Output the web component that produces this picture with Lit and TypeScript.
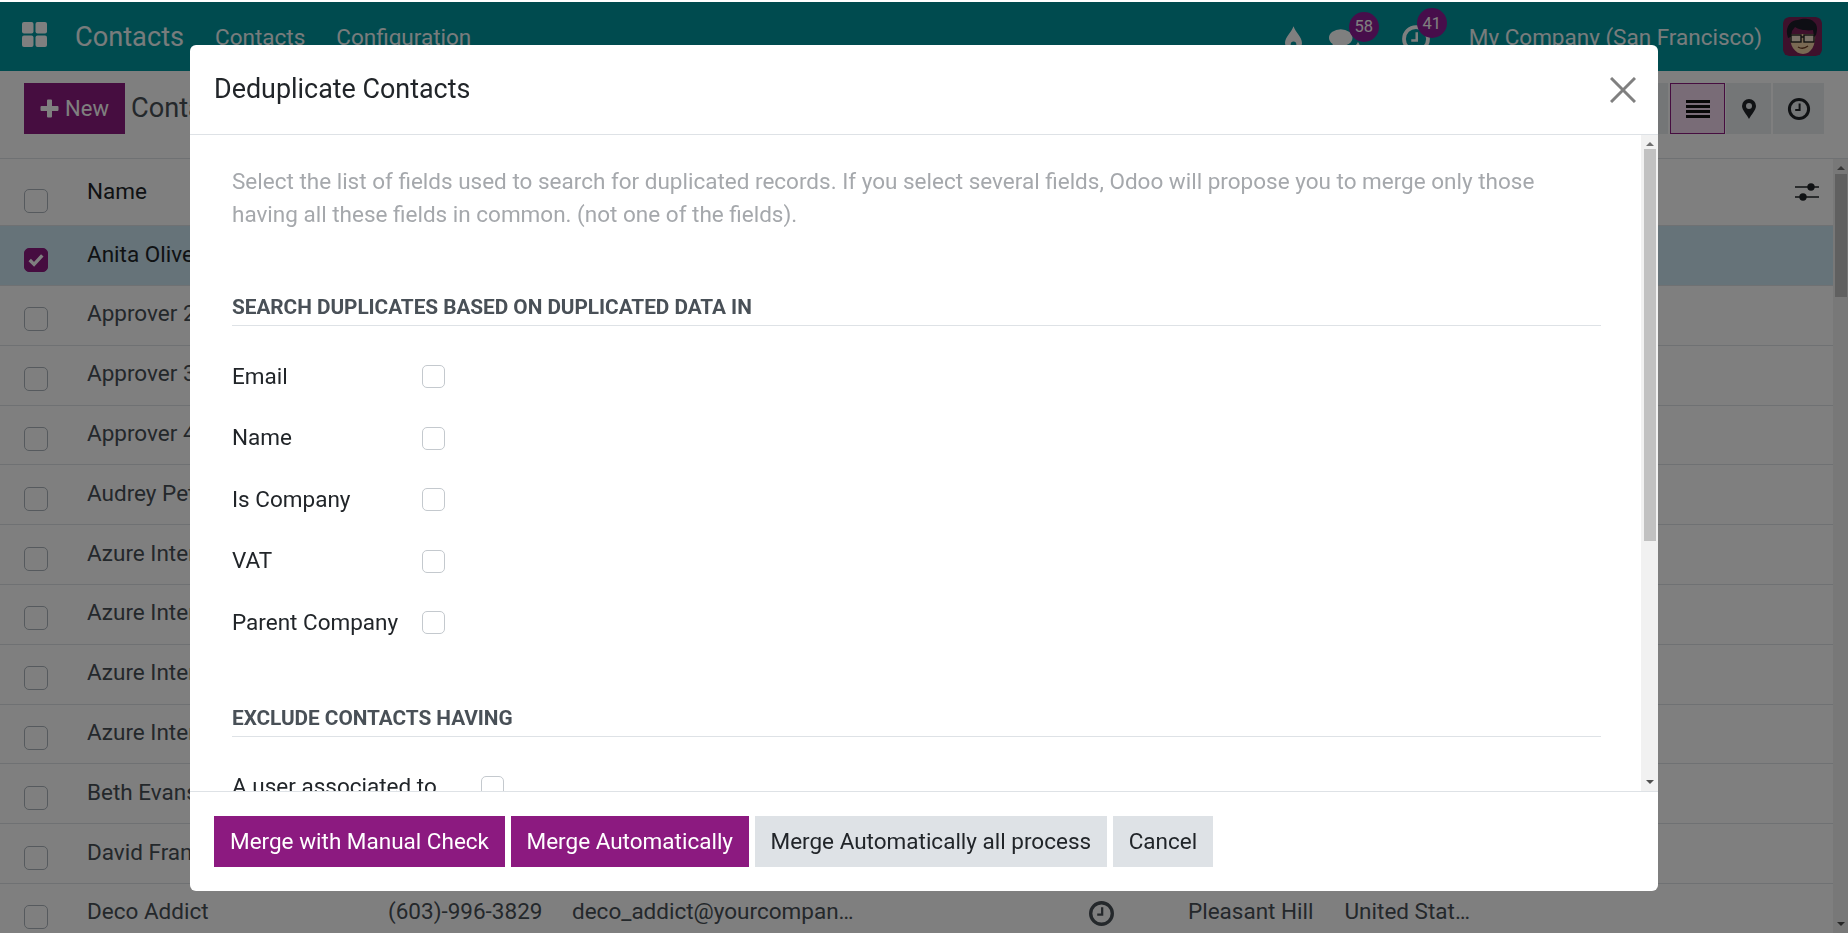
import { LitElement, html, css, svg } from "lit";
import { customElement } from "lit/decorators.js";

const clock = (s: number) => html`<svg class="ic" width=${s} height=${s} viewBox="0 0 24 24"><circle cx="12" cy="12" r="9.6" fill="none" stroke="currentColor" stroke-width="3"/><path d="M12.6 6.5v6.600H8.2" fill="none" stroke="currentColor" stroke-width="2"/></svg>`;

const rows: [string, string, string, string, string, boolean][] = [
  ["Anita Oliver", "", "", "", "", false],
  ["Approver 2", "", "", "", "", false],
  ["Approver 3", "", "", "", "", false],
  ["Approver 4", "", "", "", "", false],
  ["Audrey Peterson", "", "", "", "", false],
  ["Azure Interior", "", "", "", "", false],
  ["Azure Interior, Brandon", "", "", "", "", false],
  ["Azure Interior, Colleen", "", "", "", "", false],
  ["Azure Interior, Nicole", "", "", "", "", false],
  ["Beth Evans", "", "", "", "", false],
  ["David Franklin", "", "", "", "", false],
  ["Deco Addict", "(603)-996-3829", "deco_addict@yourcompan…", "Pleasant Hill", "United Stat…", true],
];

@customElement("app-root")
export class AppRoot extends LitElement {
  static styles = css`
    :host { display: block; width: 1848px; height: 933px; overflow: hidden; background: #fff; font-family: Roboto, "Liberation Sans", sans-serif; font-size: 22.5px; color: #212529; --primary: #8c1a80; }
    * { box-sizing: border-box; }
    .page { margin-top: 2px; height: 931px; display: flex; flex-direction: column; overflow: hidden; }
    .nav { flex: 0 0 69px; background: #00969f; color: #fff; display: flex; align-items: center; }
    .apps { margin-left: 22px; width: 25px; height: 25px; display: block; margin-top: -4px; }
    .brand { margin-left: 28px; font-size: 27.2px; opacity: .94; }
    .menu { margin-left: 31px; opacity: .94; display: flex; gap: 31px; }
    .tray { margin-left: auto; display: flex; align-items: center; height: 100%; }
    .ti { position: relative; display: block; }
    .badge { position: absolute; width: 30px; height: 30px; border-radius: 50%; background: #8f1c96; color: #fff; font-size: 16.5px; display: flex; align-items: center; justify-content: center; }
    .company { margin-left: 38px; opacity: .94; }
    .avatar { margin: 0 26px 0 21px; display: block; border-radius: 6px; }
    .panel { flex: 0 0 88px; border-bottom: 1px solid #dee2e6; display: flex; align-items: flex-start; padding: 12px 24px 0; background: #fff; }
    .new { height: 51px; width: 101px; background: var(--primary); color: #fff; display: flex; align-items: center; justify-content: center; gap: 6px; font-size: 22px; }
    .pt { margin-left: 6px; font-size: 27.2px; line-height: 50px; color: #495057; }
    .views { margin-left: auto; display: flex; gap: 1px; }
    .vb { height: 51px; background: #e9ecef; display: flex; align-items: center; justify-content: center; color: #212529; width: 45px; }
    .vb.ghost { width: 60px; margin-right: 1px; }
    .vb.on { width: 55px; background: #f2d9ee; border: 1px solid var(--primary); color: #111; }
    .vb.last { width: 51px; margin-left: 1px; }
    .list { flex: 1; display: flex; min-height: 0; }
    .tbl { flex: 1; min-width: 0; }
    .row { display: grid; grid-template-columns: 87px 301px 184px 562px 1fr; height: 59.8px; align-items: center; border-bottom: 1px solid #dee2e6; }
    .row.head { height: 67px; }
    .row.sel { background: #cce6f2; height: 60px; }
    .head .adj { justify-self: end; margin-right: 14px; grid-column: 5; display: flex; }
    .row .name { white-space: nowrap; overflow: hidden; }
    .row .name, .row .c { color: #495057; transform: translateY(-2px); }
    .row.head .name { transform: translateY(-1px); }
    .row.head .name, .row.sel .name { color: #212529; }
    .cell-c { display: flex; align-items: center; }
    .cb { width: 24px; height: 24px; margin-left: 24px; border: 1px solid #adb5bd; border-radius: 5px; background: #fff; display: block; transform: translateY(4px); }
    .head .cb { transform: translateY(9px); }
    .cb.on { background: var(--primary); border-color: var(--primary); display: flex; align-items: center; justify-content: center; }
    .city { display: flex; gap: 31px; transform: translateY(-2px); color: #495057; margin-left: 73px; }
    .clk { display: flex; align-items: center; color: #495057; margin-left: -46px; grid-column: 5; }
    .sb { flex: 0 0 15px; background: #f0f0f0; position: relative; display: flex; flex-direction: column; align-items: center; }
    .ar { flex: none; width: 0; height: 0; border-left: 4px solid transparent; border-right: 4px solid transparent; }
    .ar.up { border-bottom: 4px solid #707070; margin-top: 7px; }
    .ar.dn { border-top: 4px solid #505050; margin-top: auto; margin-bottom: 7px; }
    .th { background: #c1c1c1; width: 12px; margin-top: 4px; }
    .list .th { height: 123px; }
    .back { position: fixed; left: 0; right: 0; top: 2px; bottom: 0; background: rgba(0,0,0,.5); }
    .modal { position: fixed; left: 190px; top: 45px; width: 1468px; height: 846px; background: #fff; border-radius: 6px; display: flex; flex-direction: column; overflow: hidden; }
    .mh { flex: 0 0 90px; border-bottom: 1px solid #dee2e6; display: flex; align-items: center; justify-content: space-between; padding: 0 22px 0 24px; }
    .title { font-size: 26.9px; line-height: 1; }
    .x { display: block; margin-top: 1px; }
    .mb { flex: 1; min-height: 0; display: flex; }
    .mc { flex: 1; min-width: 0; overflow: hidden; padding: 30px 0 0 42px; }
    .inner { width: 1411px; }
    .intro { color: #a5a8ac; line-height: 33px; margin: 0; width: 1335px; }
    h3 { margin: 59px 0 0; height: 36px; font-size: 20.8px; font-weight: 700; color: #495057; line-height: 35px; border-bottom: 1.5px solid #dee2e6; width: 1369px; letter-spacing: -.05px; }
    h3.second { margin-top: 47px; }
    .form { margin-top: 20px; display: grid; grid-template-columns: max-content 1fr; column-gap: 24px; grid-auto-rows: 61.5px; align-items: center; }
    .form.ex { column-gap: 44px; }
    .form .lb { transform: translateY(-1px); }
    .fcb { width: 23px; height: 23px; border: 1px solid #c4c9ce; border-radius: 5px; background: #fff; display: block; }
    .mb .sb { flex: 0 0 17px; background: #f1f1f1; }
    .mb .th { height: 392px; margin-top: 3px; }
    .mf { flex: 0 0 100px; border-top: 1.5px solid #dee2e6; padding: 24px 0 0 24px; display: flex; gap: 5.5px; align-items: flex-start; }
    .btn { height: 51px; padding: 0 16px 2px; display: flex; align-items: center; background: #dee2e6; color: #212529; white-space: nowrap; }
    .btn.pri { background: var(--primary); color: #fff; }
  `;

  private face() {
    return html`<svg class="avatar" width="39" height="39" viewBox="0 0 39 39">
      <rect width="39" height="39" rx="6" fill="#7c2258"/>
      <path d="M7 17c-1 11 5 20 13 20s13-9 12-20z" fill="#f3d3a6"/>
      <path d="M4 17C3 9 8 3 15 3c5-2 13-2 16 2 3 2 4 7 2 13l-2 2-1-7c-5 1-14 0-18-3l-3 4-1 6-3 1z" fill="#1c1c28"/>
      <rect x="8" y="18" width="10" height="7" fill="#f7e7d0" stroke="#222" stroke-width="1.400"/>
      <rect x="21" y="18" width="10" height="7" fill="#f7e7d0" stroke="#222" stroke-width="1.400"/>
      <path d="M18 20h3" stroke="#222" stroke-width="1.400"/>
      <path d="M15 30q5 3 10-1" fill="none" stroke="#6a3a22" stroke-width="1.300"/>
    </svg>`;
  }

  render() {
    const boxes = ["Email", "Name", "Is Company", "VAT", "Parent Company"];
    return html`
      <div class="page">
        <div class="nav">
          <svg class="apps" viewBox="0 0 25 25" fill="#fff"><rect width="11.5" height="11.5" rx="2"/><rect x="13.5" width="11.5" height="11.5" rx="2"/><rect y="13.5" width="11.5" height="11.5" rx="2"/><rect x="13.5" y="13.5" width="11.5" height="11.5" rx="2"/></svg>
          <div class="brand">Contacts</div>
          <div class="menu"><span>Contacts</span><span>Configuration</span></div>
          <div class="tray">
            <svg class="ti" style="margin-top:4px" width="17" height="26" viewBox="0 0 16 24"><path d="M8 0c2 6 8 10 8 16a8 8 0 0 1-16 0C0 10 6 6 8 0z" fill="#fff"/><circle cx="8" cy="17" r="2.600" fill="#00969f"/></svg>
            <div class="ti" style="margin-left:27px;width:32px;height:26px;margin-top:8px">
              <svg width="32" height="26" viewBox="0 0 30 24" fill="#fff"><ellipse cx="11" cy="9" rx="11" ry="8"/><path d="M4 13l-2 8 8-4z"/><path d="M14 19c6 1 12-2 13-6 2 2 3 5 0 8l1 3-5-2c-3 1-7 0-9-3z"/></svg>
              <span class="badge" style="left:20px;top:-16px">58</span>
            </div>
            <div class="ti" style="margin-left:40px;color:#fff;margin-top:5px;height:30px">
              ${clock(30)}
              <span class="badge" style="left:16px;top:-16px">41</span>
            </div>
            <div class="company">My Company (San Francisco)</div>
            ${this.face()}
          </div>
        </div>
        <div class="panel">
          <div class="new"><svg width="19" height="19" viewBox="0 0 19 19" fill="#fff"><path d="M7 1.500a1 1 0 0 1 1-1h3a1 1 0 0 1 1 1V7h5.500a1 1 0 0 1 1 1v3a1 1 0 0 1-1 1H12v5.500a1 1 0 0 1-1 1H8a1 1 0 0 1-1-1V12H1.500a1 1 0 0 1-1-1V8a1 1 0 0 1 1-1H7z"/></svg>New</div>
          <div class="pt">Contacts</div>
          <div class="views">
            <div class="vb ghost"></div>
            <div class="vb on"><svg width="24" height="18" viewBox="0 0 24 18" fill="currentColor"><rect width="24" height="3"/><rect y="5" width="24" height="3"/><rect y="10" width="24" height="3"/><rect y="15" width="24" height="3"/></svg></div>
            <div class="vb"><svg width="14" height="20" viewBox="0 0 14 20"><path fill-rule="evenodd" d="M7 0a7 7 0 0 1 7 7c0 4-5 9-7 13C5 16 0 11 0 7a7 7 0 0 1 7-7zm0 4a3 3 0 1 0 0 6 3 3 0 0 0 0-6z" fill="currentColor"/></svg></div>
            <div class="vb last">${clock(24)}</div>
          </div>
        </div>
        <div class="list">
          <div class="tbl">
            <div class="row head">
              <div class="cell-c"><span class="cb"></span></div>
              <div class="name">Name</div>
              <div class="adj"><svg width="24" height="20" viewBox="0 0 24 20" fill="none"><path d="M0 5h24M0 15h24" stroke="#212529" stroke-width="1.400"/><circle cx="16" cy="5" r="3.700" fill="#212529"/><circle cx="8" cy="15" r="3.700" fill="#212529"/></svg></div>
            </div>
            ${rows.map((r, i) => html`
              <div class="row ${i === 0 ? "sel" : ""}">
                <div class="cell-c">
                  <span class="cb ${i === 0 ? "on" : ""}">${i === 0 ? svg`<svg width="16" height="14" viewBox="0 0 14 12"><path d="M1.500 6l3.800 3.800L12.500 2" fill="none" stroke="#fff" stroke-width="3"/></svg>` : ""}</span>
                </div>
                <div class="name">${r[0]}</div>
                <div class="c">${r[1]}</div>
                <div class="c">${r[2]}</div>
                ${r[5] ? html`<div class="clk">${clock(27)}<div class="city"><span>${r[3]}</span><span>${r[4]}</span></div></div>` : ""}
              </div>`)}
          </div>
          <div class="sb"><span class="ar up"></span><div class="th"></div><span class="ar dn"></span></div>
        </div>
      </div>
      <div class="back"></div>
      <div class="modal">
        <div class="mh">
          <div class="title">Deduplicate Contacts</div>
          <svg class="x" width="26" height="26" viewBox="0 0 26 26"><path d="M1 1l24 24M25 1L1 25" stroke="#808080" stroke-width="3"/></svg>
        </div>
        <div class="mb">
          <div class="mc"><div class="inner">
            <p class="intro">Select the list of fields used to search for duplicated records. If you select several fields, Odoo will propose you to merge only those having all these fields in common. (not one of the fields).</p>
            <h3>SEARCH DUPLICATES BASED ON DUPLICATED DATA IN</h3>
            <div class="form">${boxes.map((b) => html`<span class="lb">${b}</span><span class="fcb"></span>`)}</div>
            <h3 class="second">EXCLUDE CONTACTS HAVING</h3>
            <div class="form ex"><span class="lb">A user associated to</span><span class="fcb"></span></div>
          </div></div>
          <div class="sb"><span class="ar up"></span><div class="th"></div><span class="ar dn"></span></div>
        </div>
        <div class="mf">
          <div class="btn pri">Merge with Manual Check</div>
          <div class="btn pri">Merge Automatically</div>
          <div class="btn">Merge Automatically all process</div>
          <div class="btn">Cancel</div>
        </div>
      </div>
    `;
  }
}
